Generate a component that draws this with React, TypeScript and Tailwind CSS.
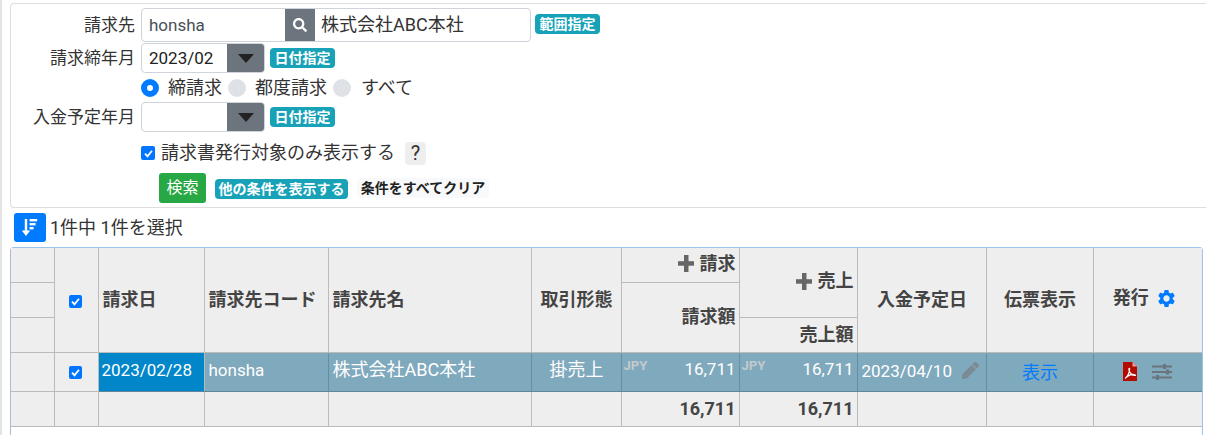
import React from "react";
import { FaSearch, FaPen } from "react-icons/fa";
import { MdSettings } from "react-icons/md";

const font = "[font-family:'Roboto','Noto_Sans_CJK_JP',sans-serif]";

function L({ children }: { children: React.ReactNode }) {
  return <span className="text-[17px]">{children}</span>;
}

function Badge({ children, w }: { children: React.ReactNode; w: string }) {
  return (
    <span className={`inline-flex h-5 items-center justify-center rounded bg-[#17a2b8] text-[14px] font-bold leading-none text-white ${w}`}>
      {children}
    </span>
  );
}

function Label({ children }: { children: React.ReactNode }) {
  return <div className="w-[135px] shrink-0 whitespace-nowrap text-right text-[17px] text-[#333]">{children}</div>;
}

function Caret() {
  return (
    <span className="flex w-[37px] items-center justify-center self-stretch bg-[#6c757d]">
      <span className="h-0 w-0 border-x-[8px] border-t-[9px] border-x-transparent border-t-[#222]" />
    </span>
  );
}

function DateSel({ value }: { value: string }) {
  return (
    <div className="flex h-[30px] w-[124px] overflow-hidden rounded border border-[#ced4da] bg-white">
      <span className="flex-1 pl-[7px] text-[17px] leading-[28px] text-[#222]">{value}</span>
      <Caret />
    </div>
  );
}

function Radio({ on }: { on?: boolean }) {
  return on ? (
    <span className="h-[18px] w-[18px] shrink-0 rounded-full border-[6px] border-[#007bff] bg-white" />
  ) : (
    <span className="h-[18px] w-[18px] shrink-0 rounded-full bg-[#dee2e6]" />
  );
}

function Check({ big }: { big?: boolean }) {
  return (
    <span className={`inline-flex items-center justify-center rounded-[2px] bg-[#0075ff] align-middle ${big ? "h-[14px] w-[14px]" : "h-[13px] w-[13px]"}`}>
      <svg viewBox="0 0 12 12" className="h-[11px] w-[11px]">
        <path d="M2.2 6.2 L4.9 9 L9.8 3" fill="none" stroke="#fff" strokeWidth="2" />
      </svg>
    </span>
  );
}

function Plus() {
  return (
    <svg viewBox="0 0 16 17" className="h-[17px] w-[16px] shrink-0" fill="#666">
      <rect x="6" y="0" width="4.5" height="17" />
      <rect x="0" y="6.2" width="16" height="4.5" />
    </svg>
  );
}

function Pdf() {
  return (
    <svg viewBox="0 0 14 19" className="h-[19px] w-[14px]">
      <path d="M0 0H9.5L14 4.5V19H0Z" fill="#b30b00" />
      <path d="M9.5 0V4.5H14Z" fill="#e6a3a0" />
      <path d="M2 16.5C4.5 15 6.8 10 6.6 7C6.5 5.6 5.7 6.3 6 8C6.5 10.8 9 13.5 12 13.5C12.8 13.5 12.5 12.6 11 12.5C8.5 12.3 5.5 13.2 3 15.5" fill="none" stroke="#fff" strokeWidth="1.2" />
    </svg>
  );
}

function Sliders() {
  return (
    <svg viewBox="0 0 20 16" className="h-[16px] w-[20px]" fill="#6c757d">
      <rect x="0" y="1.5" width="20" height="2" />
      <rect x="11" y="0" width="3" height="5" />
      <rect x="0" y="7" width="20" height="2" />
      <rect x="14" y="5.5" width="3" height="5" />
      <rect x="0" y="12.5" width="20" height="2" />
      <rect x="4" y="11" width="3" height="5" />
    </svg>
  );
}

const th = "border border-[#bbb] bg-[#eee] py-0 pl-[4px] pr-[3px] font-bold text-[#444]";
const td = "border border-[#bbb] bg-[#eee] p-0";
const selBase = "border border-[#bbb] border-b-[#5f8699] border-l-[#668da1] border-r-[#668da1] bg-[#7fa9bd] py-0 pl-[4px] pr-[3px]";
const sel = `${selBase} text-white`;

function Amount() {
  return (
    <div className="flex items-start justify-between">
      <span className="-ml-[2px] mt-[5px] text-[13px] font-bold leading-[16px] text-[#c4c9cc]">JPY</span>
      <span className="mt-[3px] text-[17px] leading-[26px]">16,711</span>
    </div>
  );
}

export default function App() {
  return (
    <div className={`${font} h-[435px] w-[1206px] overflow-hidden border-l-2 border-[#e4e4e4] bg-white pt-[3px] text-[18px] leading-[24px] text-[#333]`}>
      <div className="ml-[8px] h-[205px] rounded-l border border-r-0 border-[#dedede] pt-[4px]">
        <div className="flex h-[35px] items-start gap-[6px]">
          <div className="-ml-[11px] flex h-[34px] items-center"><Label>請求先</Label></div>
          <div className="flex h-[34px] w-[390px] overflow-hidden rounded border border-[#ced4da]">
            <span className="w-[143px] pl-[7px] text-[17px] leading-[32px] text-[#495057]">honsha</span>
            <span className="flex w-[30px] items-center justify-center bg-[#6c757d] text-white"><FaSearch className="h-[14px] w-[14px]" /></span>
            <span className="flex-1 whitespace-nowrap pl-[6px] leading-[31px] text-[#333]">株式会社ABC本社</span>
          </div>
          <div className="-ml-[2px] mt-[3px]"><Badge w="w-[65px]">範囲指定</Badge></div>
        </div>
        <div className="flex h-[30px] items-center gap-[5px]">
          <div className="-ml-[11px] mr-[1px]"><Label>請求締年月</Label></div>
          <DateSel value="2023/02" />
          <Badge w="w-[65px]">日付指定</Badge>
        </div>
        <div className="flex h-[29px] items-center pl-[130px] text-[#333]">
          <Radio on /><span className="ml-[9px] mr-[6px]">締請求</span>
          <Radio /><span className="ml-[9px] mr-[6px]">都度請求</span>
          <Radio /><span className="ml-[10px]">すべて</span>
        </div>
        <div className="flex h-[30px] items-center gap-[5px]">
          <div className="-ml-[11px] mr-[1px]"><Label>入金予定年月</Label></div>
          <DateSel value="" />
          <Badge w="w-[65px]">日付指定</Badge>
        </div>
        <div className="mt-[9px] flex h-[24px] items-center pl-[130px]">
          <Check big />
          <span className="ml-[6px] text-[#333]">請求書発行対象のみ表示する</span>
          <span className="ml-[10px] flex h-[23px] w-[21px] items-center justify-center rounded bg-[#eee] text-[20px] text-[#333]">?</span>
        </div>
        <div className="mt-[8px] flex items-center pl-[148px]">
          <span className="flex h-[30px] w-[47px] items-center justify-center rounded-[3px] bg-[#28a745] text-[16px] text-white">検索</span>
          <span className="ml-[9px]"><Badge w="w-[133px]">他の条件を表示する</Badge></span>
          <span className="ml-[9px] flex h-5 w-[132px] items-center justify-center rounded bg-[#f8f9fa] pb-[1px] text-[14px] font-bold text-[#222]">条件をすべてクリア</span>
        </div>
      </div>

      <div className="mt-[5px] flex h-[29px] items-center">
        <span className="ml-[12px] flex h-[29px] w-[32px] items-center justify-center rounded-[3px] bg-[#007bff]">
          <svg viewBox="0 0 16 17" className="h-[17px] w-[16px]" fill="#fff">
            <path d="M2.8 0h2.4v11.5h3L4 17-.2 11.5h3z" />
            <rect x="7.6" y="0" width="7.6" height="2.4" />
            <rect x="7.6" y="4" width="6" height="2.4" />
            <rect x="7.6" y="8" width="4" height="2.4" />
          </svg>
        </span>
        <span className="ml-[4px] text-[#333]">1件中 1件を選択</span>
      </div>

      <div className="ml-[8px] mt-[5px] h-[200px] w-[1193px] rounded-t border border-b-0 border-[#9cc3ea] border-l-[#a9bccf] bg-white">
        <table className="w-[1191px] table-fixed border-collapse text-[18px] leading-[24px]">
          <colgroup>
            <col className="w-[43px]" /><col className="w-[44px]" /><col className="w-[106px]" /><col className="w-[124px]" />
            <col className="w-[203px]" /><col className="w-[90px]" /><col className="w-[118px]" /><col className="w-[118px]" />
            <col className="w-[129px]" /><col className="w-[107px]" /><col className="w-[109px]" />
          </colgroup>
          <tbody>
            <tr className="h-[34px]">
              <td className={`${td} border-l-0 border-t-0`} />
              <td rowSpan={3} className={`${td} border-t-0 pr-[2px] text-center`}><Check /></td>
              <th rowSpan={3} className={`${th} border-t-0 pl-[3px] text-left`}>請求日</th>
              <th rowSpan={3} className={`${th} border-t-0 text-left`}><span className="whitespace-nowrap">請求先コード</span></th>
              <th rowSpan={3} className={`${th} border-t-0 text-left`}>請求先名</th>
              <th rowSpan={3} className={`${th} border-t-0 text-center`}>取引形態</th>
              <th className={`${th} border-t-0 text-right`}>
                <span className="inline-flex items-center gap-[6px]"><Plus />請求</span>
              </th>
              <th rowSpan={2} className={`${th} border-t-0 text-right`}>
                <span className="inline-flex items-center gap-[6px]"><Plus />売上</span>
              </th>
              <th rowSpan={3} className={`${th} border-t-0 text-center`}>入金予定日</th>
              <th rowSpan={3} className={`${th} border-t-0 text-center`}>伝票表示</th>
              <th rowSpan={3} className={`${th} border-r-0 border-t-0 text-center`}>
                <span className="inline-flex items-center gap-[7px] pb-[3px] pr-[7px]">発行<MdSettings className="mt-[1px] h-[21px] w-[21px] text-[#007bff]" /></span>
              </th>
            </tr>
            <tr className="h-[35px]">
              <td className={`${td} border-l-0`} />
              <th rowSpan={2} className={`${th} text-right`}>請求額</th>
            </tr>
            <tr className="h-[35px]">
              <td className={`${td} border-l-0`} />
              <th className={`${th} text-right`}>売上額</th>
            </tr>
            <tr className="h-[39px]">
              <td className={`${td} border-l-0`} />
              <td className={`${td} pr-[2px] text-center`}><Check /></td>
              <td className="border border-[#bbb] border-b-[#5f8699] bg-[#0086c9] px-[3px] pb-[3px] pt-0 text-white"><L>2023/02/28</L></td>
              <td className={`${sel} pb-[3px]`}><L>honsha</L></td>
              <td className={`${sel} pb-[3px]`}><span className="whitespace-nowrap">株式会社ABC本社</span></td>
              <td className={`${sel} pb-[3px] text-center`}>掛売上</td>
              <td className={`${sel} align-top`}><Amount /></td>
              <td className={`${sel} align-top`}><Amount /></td>
              <td className={`${sel} pl-[3px]`}>
                <span className="flex items-center justify-between pb-[2px] pr-[4px]"><L>2023/04/10</L><FaPen className="h-[17px] w-[17px] text-[#7c8a93]" /></span>
              </td>
              <td className={`${selBase} pt-[2px] text-center text-[#007bff]`}>表示</td>
              <td className={`${sel} border-r-0`}>
                <span className="flex items-center gap-[15px] pl-[25px]">
                  <Pdf />
                  <Sliders />
                </span>
              </td>
            </tr>
            <tr className="h-[35px]">
              <td className={`${td} border-l-0`} />
              <td className={td} />
              <td className={td} />
              <td className={td} />
              <td className={td} />
              <td className={td} />
              <th className={`${th} text-right`}>16,711</th>
              <th className={`${th} text-right`}>16,711</th>
              <td className={td} />
              <td className={td} />
              <td className={`${td} border-r-0`} />
            </tr>
          </tbody>
        </table>
      </div>
    </div>
  );
}
